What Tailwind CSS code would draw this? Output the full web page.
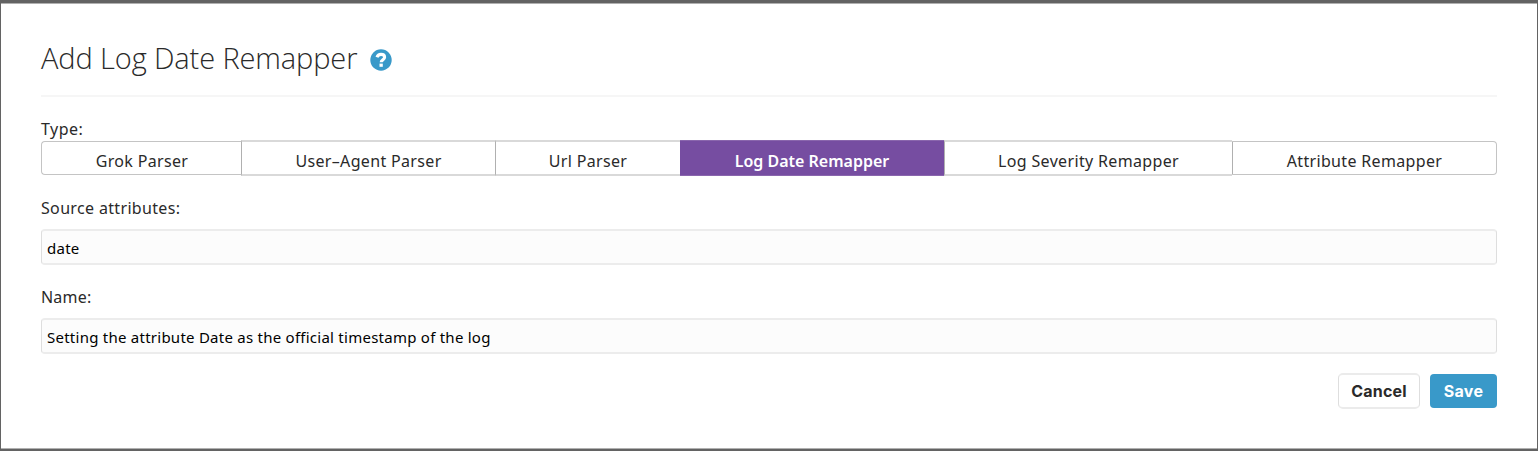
<!DOCTYPE html>
<html lang="en">
<head>
<meta charset="utf-8">
<title>Add Log Date Remapper</title>
<script src="https://cdn.jsdelivr.net/npm/@tailwindcss/browser@4"></script>
</head>
<body class="h-[451px] overflow-hidden bg-[#636363] pt-[3px] px-px font-['Noto_Sans','Open_Sans',sans-serif] text-[#2a2a2a]">
<main class="h-[446px] border-y border-[#b0b0b0] bg-white px-10 pt-9">
  <header class="flex h-[57px] items-start border-b-2 border-[#f6f6f6]">
    <h1 class="whitespace-nowrap font-['Open_Sans',sans-serif] text-[29px] leading-[36px] font-light tracking-[-0.12px]">Add Log Date Remapper</h1>
    <svg class="ml-[13px] mt-[9px] size-[22px]" viewBox="0 0 22 22" fill="none" aria-label="Help">
      <circle cx="11" cy="11" r="10.7" fill="#3999c9"/>
      <path d="M7 8.3C7.6 6.4 9 5.4 11 5.4c2.1 0 3.6 1.2 3.6 2.9 0 2.7-3.4 2.4-3.4 4.9" stroke="#fff" stroke-width="3.1"/>
      <path d="M9.5 14.6h3.3v3.2H9.5z" fill="#fff"/>
    </svg>
  </header>

  <div class="pt-[22px]">
    <div class="h-[21px] text-base leading-5 tracking-[0.45px]">Type:</div>
    <div class="grid h-9 grid-cols-[200px_254px_185px_264px_288px_265px] grid-rows-[36px] text-center text-base leading-[26px] tracking-[0.34px] whitespace-nowrap">
      <button class="my-px rounded-l border border-r-0 border-[#c4c4c4] pt-1.5 pl-px">Grok Parser</button>
      <button class="border-y-2 border-l border-y-[#d9d9d9] border-l-[#b0b0b0] pt-1.5">User–Agent Parser</button>
      <button class="border-y-2 border-l border-y-[#d9d9d9] border-l-[#b0b0b0] pt-1.5">Url Parser</button>
      <button class="border-y border-[#8a66ad] bg-[#764da1] pt-1.5 font-semibold tracking-normal text-white">Log Date Remapper</button>
      <button class="border-y-2 border-l border-y-[#d9d9d9] border-l-[#b0b0b0] pt-1.5">Log Severity Remapper</button>
      <button class="my-px rounded-r border border-[#c4c4c4] border-l-[#b0b0b0] pt-1.5">Attribute Remapper</button>
    </div>
  </div>

  <label class="block pt-[21px]">
    <span class="block h-8 text-base leading-[22px] tracking-[0.34px]">Source attributes:</span>
    <input class="block h-9 w-full rounded border-x border-y-2 border-x-[#dedede] border-y-[#ececec] bg-[#fcfcfc] px-[5px] pt-0.5 text-[15px] tracking-[0.25px] text-black" value="date">
  </label>
  <label class="block pt-[21px]">
    <span class="block h-8 text-base leading-[22px] tracking-[0.2px]">Name:</span>
    <input class="block h-9 w-full rounded border-x border-y-2 border-x-[#dedede] border-y-[#ececec] bg-[#fcfcfc] px-[5px] pt-0.5 text-[15px] tracking-[0.25px] text-black" value="Setting the attribute Date as the official timestamp of the log">
  </label>

  <footer class="flex justify-end gap-2.5 pt-[19px] font-[Inter,sans-serif] text-base font-bold">
    <button class="h-9 w-[82px] rounded-[5px] border-x border-y-2 border-x-[#dedede] border-y-[#ebebeb] bg-white tracking-[0.15px]">Cancel</button>
    <button class="my-px h-[34px] w-[67px] rounded bg-[#3999c9] tracking-[0.3px] text-white">Save</button>
  </footer>
</main>
</body>
</html>
